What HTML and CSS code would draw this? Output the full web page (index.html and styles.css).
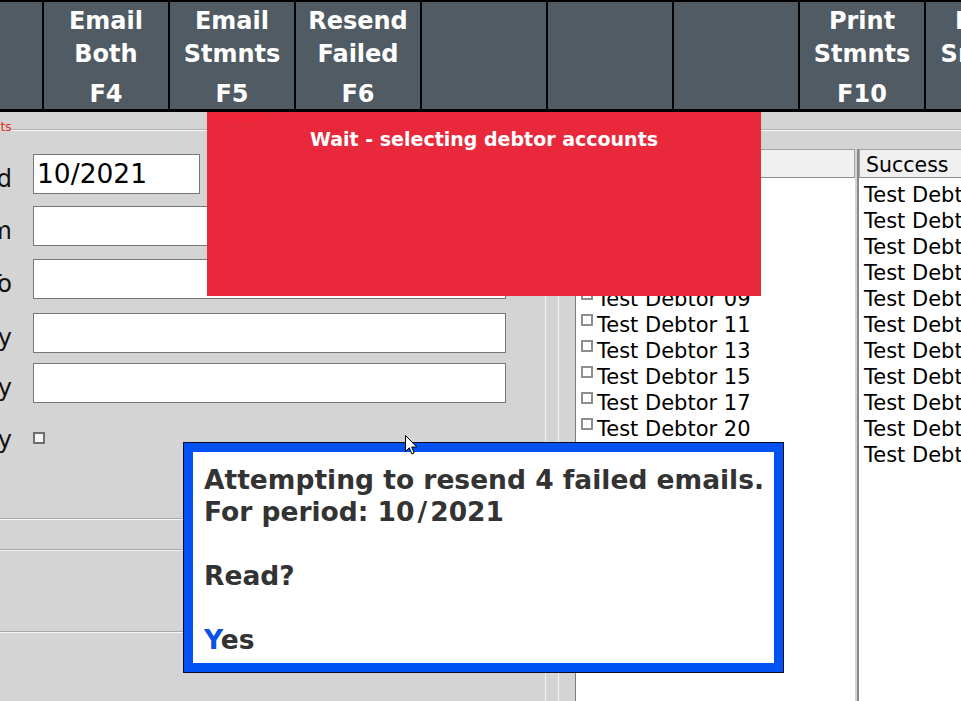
FILE: index.html
```html
<!DOCTYPE html>
<html lang="en">
<head>
<meta charset="utf-8">
<title>Statements</title>
<link rel="stylesheet" href="styles.css">
</head>
<body>
<div class="app">
  <div class="toolbar">
    <div class="tbtn"><span class="lbl"></span><span class="key"></span></div>
    <div class="tbtn"><span class="lbl">Email<br>Both</span><span class="key">F4</span></div>
    <div class="tbtn"><span class="lbl">Email<br>Stmnts</span><span class="key">F5</span></div>
    <div class="tbtn"><span class="lbl">Resend<br>Failed</span><span class="key">F6</span></div>
    <div class="tbtn"><span class="lbl"></span><span class="key"></span></div>
    <div class="tbtn"><span class="lbl"></span><span class="key"></span></div>
    <div class="tbtn"><span class="lbl"></span><span class="key"></span></div>
    <div class="tbtn"><span class="lbl">Print<br>Stmnts</span><span class="key">F10</span></div>
    <div class="tbtn"><span class="lbl">Print<br>Smmry</span><span class="key">F11</span></div>
  </div>

  <div class="main">
    <div class="legend"><span class="legend-text">Statements</span><span class="gline"></span></div>
    <div class="gb-body">
      <div class="form-panel">
        <div class="frow"><label class="flabel">Period</label><div class="finput short">10/2021</div></div>
        <div class="frow"><label class="flabel">From</label><div class="finput"></div></div>
        <div class="frow r3"><label class="flabel">To</label><div class="finput"></div></div>
        <div class="frow r4"><label class="flabel">Category</label><div class="finput"></div></div>
        <div class="frow r5"><label class="flabel">Delivery</label><div class="finput"></div></div>
        <div class="frow cbrow"><label class="flabel">Summary</label><span class="fcheck"></span></div>
        <div class="sep sep1"></div>
        <div class="sep sep2"></div>
        <div class="sep sep3"></div>
      </div>
      <div class="splitter"><span class="bar"></span></div>
      <div class="list list-mid">
        <div class="lhead">Failed</div>
        <div class="lbody">
          <div class="li"><span class="lcheck"></span>Test Debtor 01</div>
          <div class="li"><span class="lcheck"></span>Test Debtor 03</div>
          <div class="li"><span class="lcheck"></span>Test Debtor 05</div>
          <div class="li"><span class="lcheck"></span>Test Debtor 07</div>
          <div class="li"><span class="lcheck"></span>Test Debtor 09</div>
          <div class="li"><span class="lcheck"></span>Test Debtor 11</div>
          <div class="li"><span class="lcheck"></span>Test Debtor 13</div>
          <div class="li"><span class="lcheck"></span>Test Debtor 15</div>
          <div class="li"><span class="lcheck"></span>Test Debtor 17</div>
          <div class="li"><span class="lcheck"></span>Test Debtor 20</div>
        </div>
      </div>
      <div class="list list-right">
        <div class="lhead">Success</div>
        <div class="lbody">
          <div class="li">Test Debtor 02</div>
          <div class="li">Test Debtor 04</div>
          <div class="li">Test Debtor 06</div>
          <div class="li">Test Debtor 08</div>
          <div class="li">Test Debtor 10</div>
          <div class="li">Test Debtor 12</div>
          <div class="li">Test Debtor 14</div>
          <div class="li">Test Debtor 16</div>
          <div class="li">Test Debtor 18</div>
          <div class="li">Test Debtor 19</div>
          <div class="li">Test Debtor 21</div>
        </div>
      </div>
    </div>
  </div>

  <div class="wait">
    <div class="wait-status">Formstatus</div>
    <div class="wait-title">Wait - selecting debtor accounts</div>
  </div>

  <div class="dialog">
    <div class="dialog-inner">
      <div class="dline">Attempting to resend 4 failed emails.</div>
      <div class="dline">For period: 10<span class="slash">/</span>2021</div>
      <div class="dline blank"></div>
      <div class="dline">Read?</div>
      <div class="dline blank"></div>
      <div class="dline"><span class="hot">Y</span>es</div>
    </div>
  </div>

  <svg class="cursor" width="13" height="21" viewBox="0 0 13 21" aria-hidden="true">
    <path d="M0.5 0.5 L0.5 16.5 L4.3 12.8 L6.9 19 L9.2 18 L6.7 12 L11.8 12 Z" fill="#fff" stroke="#000" stroke-width="1" stroke-linejoin="miter"/>
  </svg>
</div>
</body>
</html>
```

FILE: styles.css
```css
* {
  box-sizing: border-box;
  margin: 0;
  padding: 0;
}

html, body {
  width: 961px;
  height: 701px;
  overflow: hidden;
}

body {
  background: #d4d4d4;
  font-family: "DejaVu Sans", Verdana, sans-serif;
  color: #000;
}

.app {
  position: relative;
  width: 961px;
  height: 701px;
  overflow: hidden;
}

/* ---------- toolbar ---------- */
.toolbar {
  display: flex;
  height: 112px;
  background: #000;
  padding-top: 2px;
  padding-bottom: 3px;
  margin-left: -82px;
}

.tbtn {
  flex: 0 0 124px;
  margin-right: 2px;
  background: #515b63;
  color: #fff;
  font-weight: bold;
  font-size: 24px;
  text-align: center;
  display: flex;
  flex-direction: column;
  padding-top: 3px;
}

.tbtn .lbl {
  display: block;
  height: 66px;
  line-height: 33px;
}

.tbtn .key {
  display: block;
  line-height: 30px;
  margin-top: 8px;
}

/* ---------- main area ---------- */
.main {
  height: 589px;
}

.legend {
  display: flex;
  align-items: flex-end;
  height: 20px;
  margin-left: -58px;
}

.legend-text {
  color: #e32a2a;
  font-size: 12px;
  line-height: 12px;
  margin-bottom: -1px;
  white-space: nowrap;
}

.gline {
  flex: 1;
  height: 2px;
  margin-bottom: 1px;
  border-top: 1px solid #b2b2b2;
  border-bottom: 1px solid #f8f8f8;
}

.gb-body {
  display: flex;
  height: 569px;
}

/* ---------- form ---------- */
.form-panel {
  flex: 0 0 655px;
  margin-left: -110px;
  padding-top: 22px;
  display: flex;
  flex-direction: column;
}

.frow {
  display: flex;
  align-items: center;
  height: 40px;
  margin-bottom: 12px;
}

.frow.r3 { margin-top: 1px; }
.frow.r4 { margin-top: 2px; }
.frow.r5 { margin-top: -2px; }

.flabel {
  flex: 0 0 122px;
  margin-right: 21px;
  text-align: right;
  font-size: 24px;
  line-height: 28px;
  padding-top: 9px;
  white-space: nowrap;
  color: #111;
}

.finput {
  width: 473px;
  height: 40px;
  background: #fff;
  border: 1px solid #767676;
  font-size: 26.5px;
  line-height: 38px;
  padding-left: 3px;
  color: #000;
}

.finput.short {
  width: 167px;
}

.cbrow {
  margin-top: 3px;
}

.cbrow .flabel {
  padding-top: 4px;
}

.fcheck {
  width: 12px;
  height: 12px;
  border: 2px solid #6e6e6e;
  background: #f4f4f4;
}

.sep {
  height: 2px;
  border-top: 1px solid #a8a8a8;
  border-bottom: 1px solid #f6f6f6;
}

.sep1 { margin-top: 48px; }
.sep2 { margin-top: 29px; }
.sep3 { margin-top: 80px; }

/* ---------- splitter ---------- */
.splitter {
  flex: 0 0 30px;
  border-left: 1px solid #f2f2f2;
  display: flex;
}

.splitter .bar {
  margin-left: 12px;
  width: 1px;
  background: #f2f2f2;
}

/* ---------- lists ---------- */
.list {
  margin-top: 17px;
  background: #fff;
  display: flex;
  flex-direction: column;
  font-size: 20.5px;
}

.list-mid {
  flex: 0 0 280px;
  border-left: 1px solid #7c7c7c;
}

.list-right {
  flex: 1 0 auto;
  margin-left: 2px;
  border-left: 2px solid #8a8a8a;
}

.lhead {
  height: 29px;
  line-height: 24px;
  padding-top: 3px;
  background: #f0f0f0;
  border: 1px solid #a3a3a3;
  border-bottom-color: #8c8c8c;
  padding-left: 6px;
  white-space: nowrap;
}

.lbody {
  padding-top: 4px;
}

.li {
  display: flex;
  align-items: flex-start;
  height: 26px;
  line-height: 26px;
  font-size: 21px;
  white-space: nowrap;
}

.list-mid .li {
  padding-left: 5px;
}

.list-right .li {
  padding-left: 5px;
}

.lcheck {
  flex: 0 0 12px;
  height: 12px;
  margin-top: 2px;
  margin-right: 4px;
  border: 2px solid #8e8e8e;
  background: #fff;
}

/* ---------- wait overlay ---------- */
.wait {
  position: absolute;
  left: 207px;
  top: 112px;
  width: 554px;
  height: 184px;
  background: #e9293b;
}

.wait-status {
  position: absolute;
  left: 2px;
  top: 0;
  font-size: 10px;
  line-height: 12px;
  color: #ff1e2c;
}

.wait-title {
  padding-top: 15px;
  text-align: center;
  color: #fff;
  font-weight: bold;
  font-size: 19px;
  line-height: 24px;
}

/* ---------- dialog ---------- */
.dialog {
  position: absolute;
  left: 183px;
  top: 442px;
  width: 601px;
  height: 231px;
  border: 1px solid #0b0b2b;
}

.dialog-inner {
  height: 100%;
  border: 9px solid #0052f2;
  background: #fff;
  padding: 12px 11px;
  font-weight: bold;
  font-size: 26.5px;
  line-height: 32px;
  color: #333;
  white-space: nowrap;
}

.dline.blank {
  height: 32px;
}

.slash {
  margin: 0 3px;
}

.hot {
  color: #0a52e6;
}

.cursor {
  position: absolute;
  left: 405px;
  top: 435px;
}
```
